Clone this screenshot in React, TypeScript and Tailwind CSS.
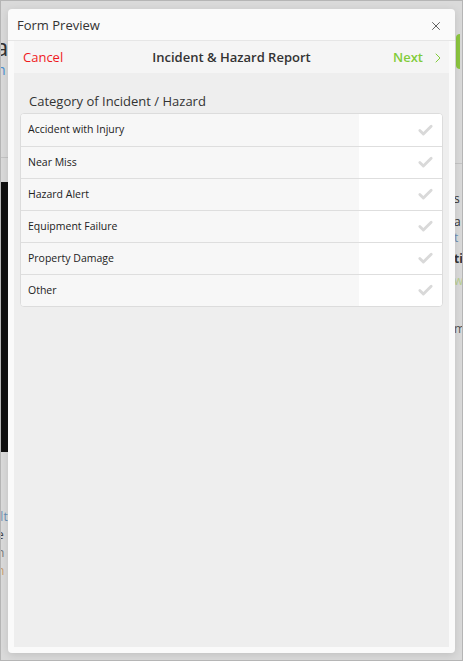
import { X, ChevronRight, Check } from "lucide-react";

const options = [
  "Accident with Injury",
  "Near Miss",
  "Hazard Alert",
  "Equipment Failure",
  "Property Damage",
  "Other",
];

function BackgroundPage() {
  return (
    <div className="flex h-full w-full bg-[#dadada]">
      <div className="flex w-[8px] flex-col overflow-hidden text-[#222]">
        <div className="h-[33px]" />
        <div className="-ml-[6px] text-[24px] leading-[26px] text-[#333]">a</div>
        <div className="h-[2px]" />
        <div className="-ml-[4px] text-[14px] leading-[16px] text-[#4b8fd1]">h</div>
        <div className="h-[80px] border-b border-[#c4c4c4]" />
        <div className="h-[24px]" />
        <div className="h-[270px] bg-[#101010]" />
        <div className="h-[56px]" />
        <div className="-ml-[8px] text-[12px] leading-[18px] text-[#6b8fb5]">ult</div>
        <div className="-ml-[4px] text-[12px] leading-[18px] text-[#444]">e</div>
        <div className="-ml-[4px] text-[12px] leading-[18px] text-[#777]">n</div>
        <div className="-ml-[4px] text-[12px] leading-[18px] text-[#c79a6a]">n</div>
      </div>
      <div className="flex-1" />
      <div className="flex w-[8px] flex-col overflow-hidden">
        <div className="h-[33px]" />
        <div className="ml-[2px] h-[35px] w-[4px] rounded-l bg-[#8cc63f]" />
        <div className="h-[95px] border-b border-[#c4c4c4]" />
        <div className="h-[26px]" />
        <div className="text-[12px] leading-[18px] text-[#333]">s</div>
        <div className="h-[6px]" />
        <div className="text-[12px] leading-[16px] text-[#333]">a</div>
        <div className="text-[12px] leading-[16px] text-[#6b8fb5]">t</div>
        <div className="h-[4px]" />
        <div className="text-[12px] font-bold leading-[18px] text-[#333]">ti</div>
        <div className="h-[4px]" />
        <div className="text-[12px] leading-[18px] text-[#b9cf8f]">w</div>
        <div className="h-[30px]" />
        <div className="text-[12px] leading-[18px] text-[#555]">m</div>
      </div>
    </div>
  );
}

export default function App() {
  return (
    <div
      className="relative h-[661px] w-[463px] overflow-hidden border border-[#b5b5b5]"
      style={{ fontFamily: '"Open Sans", "Noto Sans", sans-serif' }}
    >
      <BackgroundPage />

      <div className="absolute left-[7px] top-[8px] flex h-[644px] w-[447px] flex-col rounded-[4px] bg-[#fafafa] shadow-[0_2px_8px_rgba(0,0,0,0.12)]">
        <div className="flex h-[32px] items-center justify-between border-b border-[#e6e6e6] pl-[9px] pr-[12px] pt-[2px]">
          <span className="text-[13px] text-[#333]">Form Preview</span>
          <X className="h-[14px] w-[14px] text-[#555]" strokeWidth={1.6} />
        </div>

        <div className="mx-[6px] mb-[6px] flex flex-1 flex-col bg-[#eeeeee]">
          <div className="relative flex h-[32px] items-center justify-between bg-[#f5f5f5] pl-[9px] pr-[3px] pt-[1px]">
            <span className="text-[13px] text-[#f0191e]">Cancel</span>
            <span className="pointer-events-none absolute left-0 right-0 text-center text-[13px] font-semibold text-[#333]">
              Incident &amp; Hazard Report
            </span>
            <span className="flex items-center gap-[7px] text-[13px] font-semibold text-[#82cc3a]">
              Next
              <ChevronRight className="h-[16px] w-[16px]" strokeWidth={1.5} />
            </span>
          </div>

          <div className="px-[6px] pt-[18px]">
            <div className="pb-[2px] pl-[9px] text-[13px] font-medium leading-[20px] text-[#333]">
              Category of Incident / Hazard
            </div>
            <div className="overflow-hidden rounded-[4px] border border-[#dcdcdc] bg-white">
              {options.map((label, i) => (
                <div
                  key={label}
                  className={`flex h-[32px] items-stretch ${i > 0 ? "border-t border-[#dedede]" : ""}`}
                >
                  <div className="flex w-[338px] items-center bg-[#f7f7f7] pl-[7px] text-[10.5px] text-[#222]">
                    {label}
                  </div>
                  <div className="flex flex-1 items-center justify-end bg-white pr-[8px]">
                    <Check className="h-[17px] w-[17px] text-[#d9d9d9]" strokeWidth={4} />
                  </div>
                </div>
              ))}
            </div>
          </div>
        </div>
      </div>
    </div>
  );
}
